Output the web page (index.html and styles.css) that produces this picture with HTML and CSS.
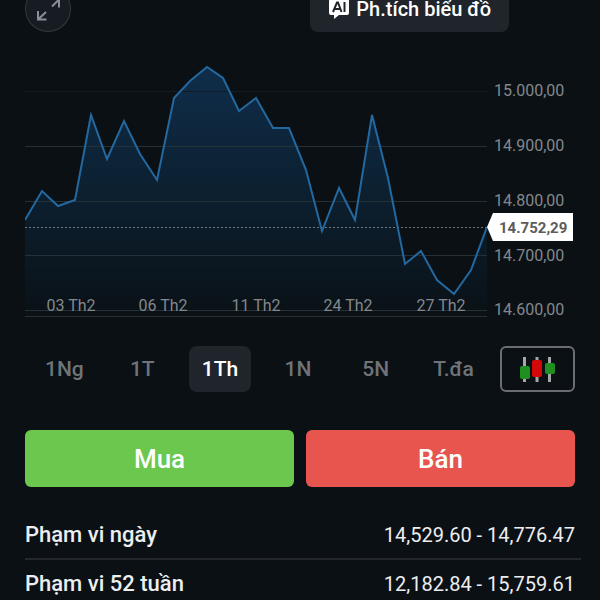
FILE: index.html
```html
<!DOCTYPE html>
<html lang="vi">
  <head>
    <meta charset="utf-8">
    <title>Biểu đồ giá</title>
    <meta name="viewport" content="width=device-width, initial-scale=1">
    <link rel="stylesheet" href="styles.css">
  </head>
  <body>
    <header class="toolbar">
      <button class="expand" type="button" aria-label="Toàn màn hình">
        <svg width="46" height="46" viewBox="0 0 46 46">
          <path d="M13 25V33.500H21.500M13 33.500L21 26M27 20.500L34 13.500M25 13H34V21.500"/>
        </svg>
      </button>
      <button class="analyze" type="button">
        <svg width="22" height="22" viewBox="0 0 22 22" aria-hidden="true">
          <path fill="#fff" d="M3 1H19Q21 1 21 3V15Q21 17 19 17H11L6 21V17H3Q1 17 1 15V3Q1 1 3 1Z"/>
          <path class="mark" d="M5 14L9 4.500H10L13.500 14M6.500 11H12M16.500 4V14"/>
        </svg>
        Ph.tích biểu đồ
      </button>
    </header>
    <main>
      <svg class="chart" viewBox="0 0 550 262" role="img" aria-label="Biểu đồ">
        <defs>
          <linearGradient id="area" gradientUnits="userSpaceOnUse" x1="0" y1="7" x2="0" y2="257">
            <stop offset="0" stop-color="#0f2d4a"/>
            <stop offset="0.500" stop-color="#0c2030"/>
            <stop offset="1" stop-color="#0a1116"/>
          </linearGradient>
        </defs>
        <path fill="url(#area)" d="M0 160L17 131L33 146L50 140L66 55L82 99L99 61L115 94L132 120L149 38L165 21L182 7L198 18L214 51L231 38L248 68H264L281 110L297 171L314 128L330 160L347 55L363 118L380 204L396 191L412 220L429 234L446 210L462 167V257H0Z"/>
        <g class="grid">
          <path class="faint" d="M0 31.500H462"/>
          <path d="M0 86.500H462M0 141.500H462M0 195.500H462M0 250.500H462M0 256.500H462"/>
        </g>
        <path class="current" d="M0 167.500H462"/>
        <path class="price" d="M0 160L17 131L33 146L50 140L66 55L82 99L99 61L115 94L132 120L149 38L165 21L182 7L198 18L214 51L231 38L248 68H264L281 110L297 171L314 128L330 160L347 55L363 118L380 204L396 191L412 220L429 234L446 210L462 167"/>
        <g class="dates">
          <text x="46" y="251">03 Th2</text>
          <text x="138" y="251">06 Th2</text>
          <text x="231" y="251">11 Th2</text>
          <text x="323" y="251">24 Th2</text>
          <text x="416" y="251">27 Th2</text>
        </g>
        <g class="levels">
          <text x="469" y="36">15.000,00</text>
          <text x="469" y="91">14.900,00</text>
          <text x="469" y="146">14.800,00</text>
          <text x="469" y="201">14.700,00</text>
          <text x="469" y="255">14.600,00</text>
        </g>
        <path fill="#fff" d="M462 167L468 153H548V181H468Z"/>
        <text class="last" x="474" y="173">14.752,29</text>
      </svg>

      <nav class="ranges">
        <button type="button">1Ng</button>
        <button type="button">1T</button>
        <button type="button" class="active">1Th</button>
        <button type="button">1N</button>
        <button type="button">5N</button>
        <button type="button">T.đa</button>
        <button type="button" class="candles" aria-label="Biểu đồ nến">
          <svg width="38" height="28" viewBox="0 0 38 28">
            <path stroke="#a6a6a6" stroke-width="3" d="M6.500 2V27M19 2V27M31.500 2V27"/>
            <rect x="2" y="11" width="10" height="13" rx="2" fill="#1f8f22"/>
            <rect x="14" y="5" width="10" height="17" rx="2" fill="#d40808"/>
            <rect x="27" y="8" width="10" height="11" rx="2" fill="#1f8f22"/>
          </svg>
        </button>
      </nav>

      <div class="actions">
        <button type="button" class="buy">Mua</button>
        <button type="button" class="sell">Bán</button>
      </div>

      <table class="stats">
        <tr>
          <th scope="row">Phạm vi ngày</th>
          <td>14,529.60 - 14,776.47</td>
        </tr>
        <tr>
          <th scope="row">Phạm vi 52 tuần</th>
          <td>12,182.84 - 15,759.61</td>
        </tr>
      </table>
    </main>
  </body>
</html>
```

FILE: styles.css
```css
* {
  box-sizing: border-box;
}
body {
  display: flow-root;
  margin: 0;
  background: #0b1015;
  color: #eceef0;
  font-family: Roboto, "Liberation Sans", sans-serif;
}
button {
  padding: 0;
  border: 0;
  background: none;
  color: inherit;
  font: inherit;
  cursor: pointer;
}
svg {
  display: block;
}

/* the toolbar is scrolled partly out of view */
.toolbar {
  display: flex;
  justify-content: space-between;
  align-items: center;
  margin-top: -14px;
  padding: 0 91px 0 25px;
}
.expand {
  width: 46px;
  height: 46px;
  border-radius: 50%;
  background: #171b22;
  box-shadow: inset 0 0 0 1px #34383f;
}
.expand path {
  fill: none;
  stroke: #8b8f95;
  stroke-width: 2;
}
.analyze {
  display: flex;
  align-items: center;
  gap: 6px;
  height: 46px;
  padding: 0 18px;
  border-radius: 8px;
  background: #20252c;
  color: #fff;
  font-size: 20px;
  font-weight: 500;
}
.analyze .mark {
  fill: none;
  stroke: #20252c;
  stroke-width: 2;
}

main {
  padding: 28px 25px 0;
}
.chart {
  width: 100%;
  font-size: 16px;
}
.grid path {
  stroke: #253037;
}
.grid .faint {
  stroke: #141a21;
}
.current {
  stroke: #6b777c;
  stroke-dasharray: 2 2;
}
.price {
  fill: none;
  stroke: #2468a0;
  stroke-width: 2;
}
.dates {
  fill: #83888c;
  text-anchor: middle;
}
.levels {
  fill: #83888c;
}
.last {
  fill: #5c5c5c;
  font-size: 15px;
  font-weight: 700;
}

.ranges {
  display: grid;
  grid-template-columns: repeat(6, 1fr) 75px;
  gap: 15px;
  margin-top: 24px;
  padding-left: 8px;
}
.ranges button {
  height: 46px;
  border-radius: 8px;
  color: #6f7479;
  font-size: 21px;
  font-weight: 500;
}
.ranges .active {
  background: #20252c;
  color: #fff;
}
.ranges .candles {
  display: grid;
  place-items: center;
  border: 2px solid #6a6e74;
  border-radius: 6px;
}

.actions {
  display: grid;
  grid-template-columns: 1fr 1fr;
  gap: 12px;
  margin-top: 38px;
}
.actions button {
  height: 57px;
  border-radius: 6px;
  color: #fff;
  font-size: 26px;
  font-weight: 500;
}
.actions .buy {
  background: #6bc74e;
}
.actions .sell {
  background: #e8554f;
}

.stats {
  width: calc(100% + 6px);
  margin-top: 24px;
  border-collapse: collapse;
  line-height: 24px;
}
.stats th,
.stats td {
  padding: 12px 0 11px;
}
.stats th {
  font-size: 22px;
  font-weight: 500;
  text-align: left;
}
.stats td {
  padding-right: 6px;
  font-size: 20px;
  text-align: right;
}
.stats tr + tr {
  border-top: 2px solid #24282d;
}
.stats tr:last-child > * {
  padding-bottom: 3px;
}
```
